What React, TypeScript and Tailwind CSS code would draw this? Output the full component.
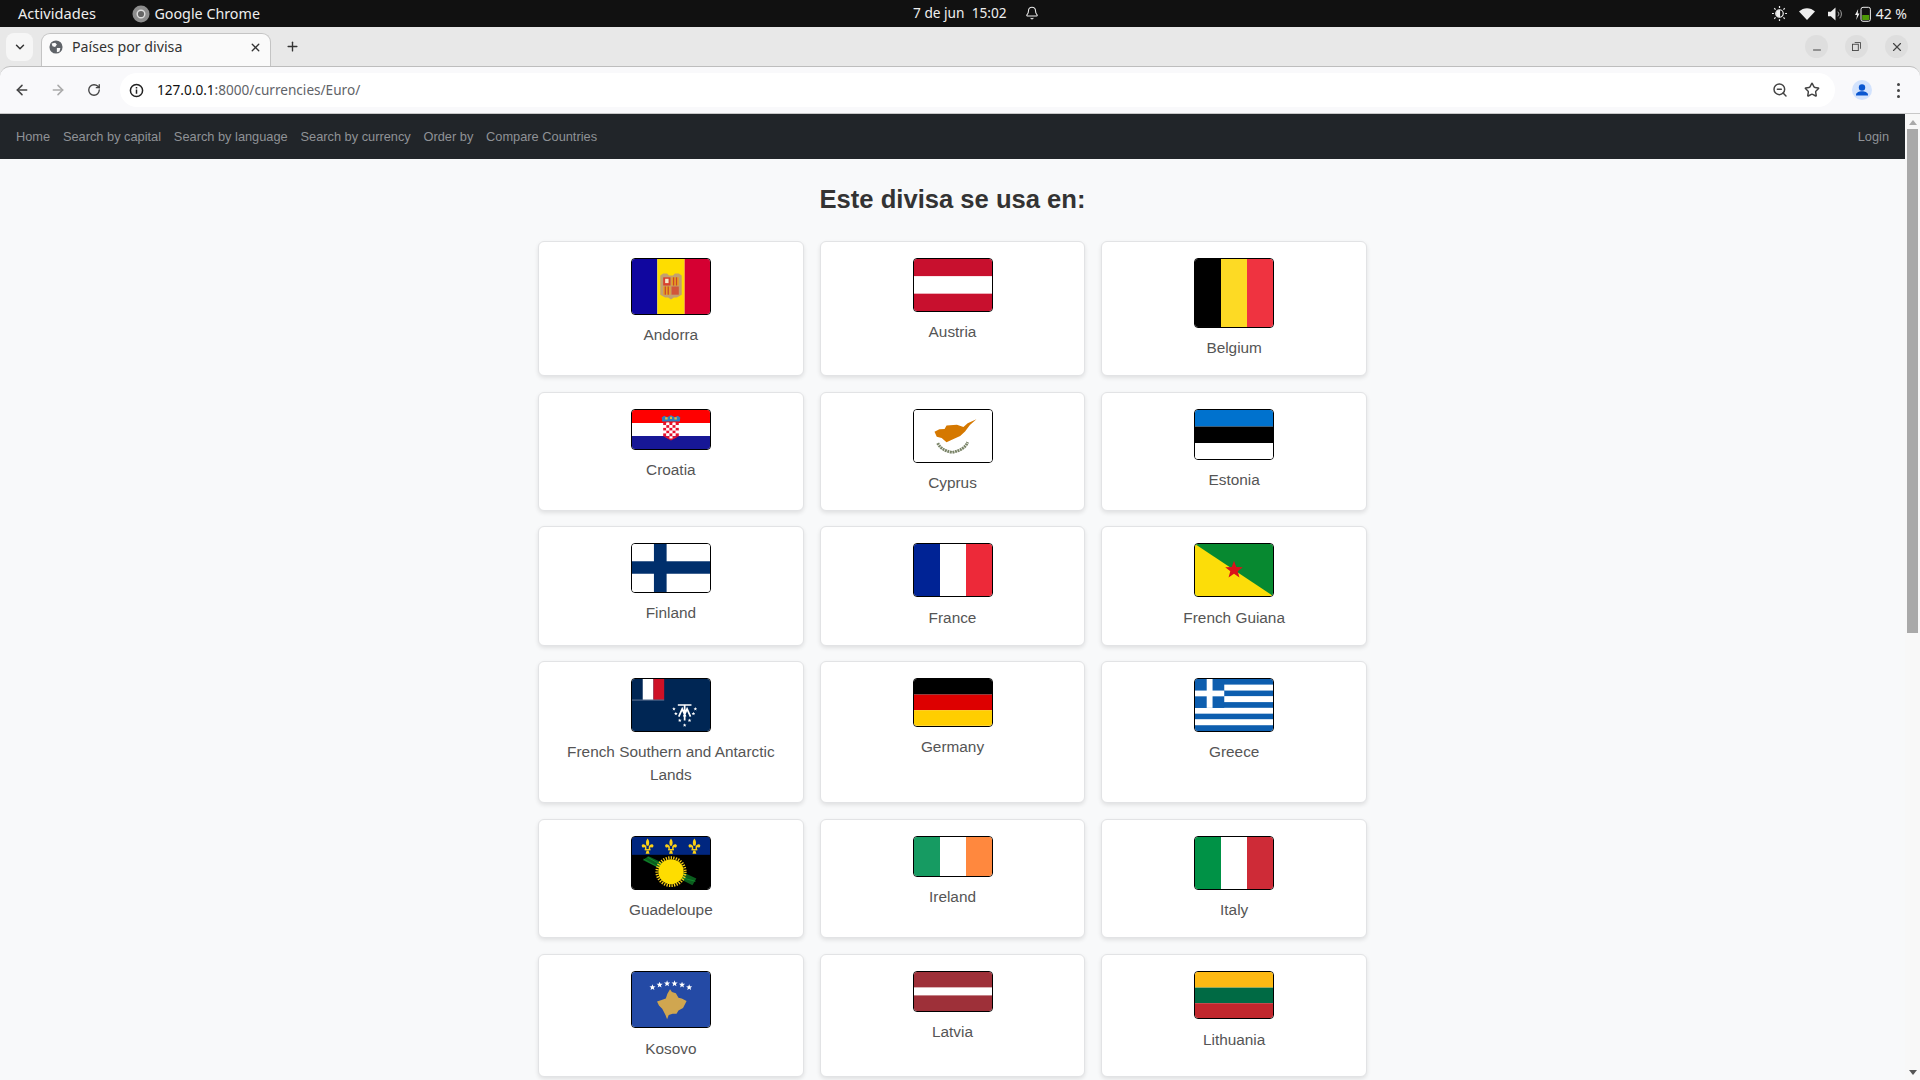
import React from "react";
import { ArrowLeft, ArrowRight, RotateCw, Star, X, Plus, ChevronDown, Minus, ZoomOut, Bell } from "lucide-react";

const H = ({ h, c, stops }: { h: number; c: string[]; stops?: number[] }) => {
  const s = stops ?? c.map((_, i) => (i * h) / c.length);
  return <>{c.map((col, i) => <rect key={i} x={0} y={s[i]} width={80} height={(i + 1 < c.length ? s[i + 1] : h) - s[i]} fill={col} />)}</>;
};
const V = ({ h, c, stops }: { h: number; c: string[]; stops?: number[] }) => {
  const s = stops ?? c.map((_, i) => (i * 80) / c.length);
  return <>{c.map((col, i) => <rect key={i} y={0} x={s[i]} height={h} width={(i + 1 < c.length ? s[i + 1] : 80) - s[i]} fill={col} />)}</>;
};
const starPts = (cx: number, cy: number, r: number) => {
  const p: string[] = [];
  for (let i = 0; i < 10; i++) {
    const a = -Math.PI / 2 + (i * Math.PI) / 5;
    const rr = i % 2 ? r * 0.42 : r;
    p.push(`${cx + rr * Math.cos(a)},${cy + rr * Math.sin(a)}`);
  }
  return p.join(" ");
};

const Fleur = ({ x }: { x: number }) => (
  <g transform={`translate(${x} 9.500)`} fill="#fcd116">
    <path d="M0-8C2-5.500 2-3 1-.5H-1C-2-3-2-5.500 0-8Z" />
    <path d="M1.200 .5C2-2.500 6-3 6-.5 6 1.500 4 2 3 1L2.500 3.500H1.200Z" />
    <path d="M-1.200 .5C-2-2.500-6-3-6-.5-6 1.500-4 2-3 1L-2.500 3.500H-1.200Z" />
    <rect x="-3" y="3" width="6" height="1.400" />
    <path d="M-1 4.400H1L2 8H-2Z" />
  </g>
);

const checks = () => {
  const out: React.ReactNode[] = [];
  for (let r = 0; r < 5; r++) for (let c = 0; c < 5; c++) {
    out.push(<rect key={`${r}-${c}`} x={32 + c * 3.2} y={13 + r * 2.9} width={3.2} height={2.9} fill={(r + c) % 2 ? "#fff" : "#e8112d"} />);
  }
  return out;
};

const flags: Record<string, { cls: string; h: number; art: React.ReactNode }> = {
  Andorra: { cls: "h-[56.6px]", h: 56.6, art: <>
    <V h={57} c={["#10069f", "#fedd00", "#d50032"]} stops={[0, 26, 54]} />
    <path d="M29 17 32 15H36L38 17H42L44 15H48L51 17V37L46 40 43 40 40 42 37 40 34 40 29 37Z" fill="#c2a070" />
    <rect x="32" y="19" width="7.500" height="8.500" fill="#d9402c" /><rect x="40.500" y="19" width="7.500" height="8.500" fill="#e8a020" />
    <rect x="32" y="28.500" width="7.500" height="8.500" fill="#e8a020" /><rect x="40.500" y="28.500" width="7.500" height="8.500" fill="#d2563a" />
    <rect x="34" y="20.500" width="3.500" height="4.500" fill="#f3e9c8" /><rect x="42" y="19" width="1.300" height="8.500" fill="#c9472c" /><rect x="45" y="19" width="1.300" height="8.500" fill="#c9472c" />
    <rect x="33.500" y="28.500" width="1.300" height="8.500" fill="#c9472c" /><rect x="36.500" y="28.500" width="1.300" height="8.500" fill="#c9472c" />
  </> },
  Austria: { cls: "h-[54px]", h: 54, art: <H h={54} c={["#c8102e", "#ffffff", "#c8102e"]} /> },
  Belgium: { cls: "h-[69.6px]", h: 69.6, art: <V h={70} c={["#000000", "#fdda24", "#ef3340"]} /> },
  Croatia: { cls: "h-[41px]", h: 41, art: <>
    <H h={41} c={["#ff0000", "#ffffff", "#171796"]} />
    <path d="M31 12 30.500 8 33 6 36 7.500 40 5.500 44 7.500 47 6 49.500 8 49 12Z" fill="#2b7fc0" />
    <path d="M34 7.500h2.500v2.500H34zM39 7h2v2.500h-2zM43.500 7.500H46V10h-2.500z" fill="#e6b933" />
    {checks()}
    <path d="M32 27.500 40 32 48 27.500Z" fill="#e8112d" /><path d="M38.400 27.500h3.200v2.500h-3.200z" fill="#fff" />
  </> },
  Cyprus: { cls: "h-[54px]", h: 54, art: <>
    <rect width="80" height="54" fill="#fff" />
    <g transform="translate(-13.300 -8.300) scale(.3333)">
      <path d="M232 54 205 66 192 78 172 71 140 73 134 84 118 85 103 93 110 108 125 112 140 125 165 114 182 106 197 92 212 72Z" fill="#d57800" />
      <path d="M113 128Q122 150 157 157Q195 150 205 125" fill="none" stroke="#7a8468" strokeWidth="9" strokeDasharray="6 2" />
    </g>
  </> },
  Estonia: { cls: "h-[51.6px]", h: 51.6, art: <H h={51.6} c={["#0072ce", "#000000", "#ffffff"]} /> },
  Finland: { cls: "h-[49.7px]", h: 49.7, art: <>
    <rect width="80" height="50" fill="#fff" />
    <rect x="22.500" width="13" height="50" fill="#002f6c" /><rect y="18" width="80" height="13" fill="#002f6c" />
  </> },
  France: { cls: "h-[54px]", h: 54, art: <V h={54} c={["#002395", "#ffffff", "#ed2939"]} /> },
  "French Guiana": { cls: "h-[54px]", h: 54, art: <>
    <rect width="80" height="54" fill="#078930" /><path d="M0 0 80 54H0Z" fill="#fcdd09" />
    <polygon points={starPts(40, 27, 9.500)} fill="#da121a" />
  </> },
  "French Southern and Antarctic Lands": { cls: "h-[54px]", h: 54, art: <>
    <rect width="80" height="54" fill="#002654" />
    <rect x="11" width="11" height="21.500" fill="#fff" /><rect x="22" width="11" height="21.500" fill="#ce1126" />
    <rect y="21.500" width="33" height=".7" fill="#8b9ab3" />
    <g fill="none" stroke="#fff" strokeWidth="1.800">
      <path d="M47 27H61M54 27V40M48 39 51.500 31 55 39M53 39 56.500 31 60 39M54 38V43" />
    </g>
    {[[43, 31], [65, 31], [45, 36], [63, 36], [49, 43], [59, 43], [54, 48]].map(([x, y], i) => <polygon key={i} points={starPts(x, y, 2)} fill="#fff" />)}
  </> },
  Germany: { cls: "h-[48.8px]", h: 48.8, art: <H h={48.8} c={["#000000", "#dd0000", "#ffce00"]} /> },
  Greece: { cls: "h-[54px]", h: 54, art: <>
    <H h={54} c={["#0d5eaf", "#fff", "#0d5eaf", "#fff", "#0d5eaf", "#fff", "#0d5eaf", "#fff", "#0d5eaf"]} />
    <rect width="30" height="30" fill="#0d5eaf" />
    <rect x="12" width="6" height="30" fill="#fff" /><rect y="12" width="30" height="6" fill="#fff" />
  </> },
  Guadeloupe: { cls: "h-[54px]", h: 54, art: <>
    <rect width="80" height="54" fill="#000" /><rect width="80" height="18.500" fill="#00267f" />
    <Fleur x={16} /><Fleur x={40} /><Fleur x={64} />
    <path d="M11 24 17 20 66 43 62 50Z" fill="#0b5d1e" />
    <path d="M12 23 30 33M16 21 32 30M50 42 65 46" stroke="#0f8a2b" strokeWidth="1" />
    <circle cx="40" cy="36" r="14.500" fill="none" stroke="#fcd116" strokeWidth="3" strokeDasharray="1.300 1.300" />
    <circle cx="40" cy="36" r="13" fill="#fedd00" />
  </> },
  Ireland: { cls: "h-[41px]", h: 41, art: <V h={41} c={["#169b62", "#ffffff", "#ff883e"]} /> },
  Italy: { cls: "h-[54px]", h: 54, art: <V h={54} c={["#009246", "#ffffff", "#ce2b37"]} /> },
  Kosovo: { cls: "h-[57.7px]", h: 57.7, art: <>
    <rect width="80" height="58" fill="#244aa5" />
    <g transform="translate(-11 -6) scale(.3333)">
      <path d="M150 72 156 80 168 84 176 98 186 100 201 108 196 118 190 130 176 138 170 148 158 148 146 152 141 165 136 152 126 132 116 122 110 110 124 105 137 100 142 86Z" fill="#d0a650" />
      {[[96, 66], [118, 58], [141, 54], [164, 54], [187, 58], [209, 66]].map(([x, y], i) => <polygon key={i} points={starPts(x, y, 10)} fill="#fff" />)}
    </g>
  </> },
  Latvia: { cls: "h-[41px]", h: 41, art: <H h={41} c={["#9e3039", "#ffffff", "#9e3039"]} stops={[0, 16.400, 24.600]} /> },
  Lithuania: { cls: "h-[48.8px]", h: 48.8, art: <H h={48.8} c={["#fdb913", "#006a44", "#c1272d"]} /> },
};

const names = Object.keys(flags);

function Card({ name }: { name: string }) {
  const f = flags[name];
  return (
    <div className="rounded-[6px] border border-[#e2e3e5] bg-white p-4 text-center shadow-[0_2px_4px_rgba(0,0,0,0.1)]">
      <div className={`mx-auto mb-[8.2px] w-20 overflow-hidden rounded-[4px] border border-black ${f.cls}`}>
        <svg viewBox={`0 0 80 ${f.h}`} preserveAspectRatio="none" className="block h-full w-full">{f.art}</svg>
      </div>
      <p className="text-[15.36px] leading-[23px] text-[#555]">{name}</p>
    </div>
  );
}

function TopBar() {
  return (
    <div className="relative flex h-[27px] shrink-0 items-center bg-[#111] pl-[18px] pr-[13px] font-['Noto_Sans',sans-serif] text-[14.6px] text-[#eee]">
      <span>Actividades</span>
      <svg viewBox="0 0 18 18" className="ml-[36px] h-[18px] w-[18px]">
        <circle cx="9" cy="9" r="8.500" fill="#8d8d8d" /><circle cx="9" cy="9" r="3.800" fill="#666" stroke="#ddd" strokeWidth="1.400" />
      </svg>
      <span className="ml-[4.500px] text-[14.3px]">Google Chrome</span>
      <div className="absolute left-[913px] flex items-center">
        <span className="w-[100px] text-[13.7px]">7 de jun&nbsp;&nbsp;15:02</span>
        <Bell size={14} className="ml-[12px]" strokeWidth={1.8} />
      </div>
      <div className="ml-auto flex items-center">
        <svg viewBox="0 0 16 16" className="h-[15px] w-[15px]" fill="none" stroke="#eee" strokeWidth="1.300">
          <circle cx="8" cy="8" r="4" /><path d="M8 5a3 3 0 0 0 0 6Z" fill="#eee" />
          <path d="M8 0v2M8 14v2M0 8h2M14 8h2M2.400 2.400l1.400 1.400M12.200 12.200l1.400 1.400M2.400 13.600l1.400-1.400M12.200 3.800l1.400-1.400" />
        </svg>
        <svg viewBox="0 0 16 12" className="ml-[12px] h-[12px] w-[16px]"><path d="M0 3.500C4.500-1 11.500-1 16 3.500L8 12Z" fill="#eee" /></svg>
        <svg viewBox="0 0 16 14" className="ml-[13px] h-[14px] w-[15px]" fill="#eee">
          <path d="M0 4.500H3L8 0V14L3 9.500H0Z" /><path d="M10.500 4.500a3.500 3.500 0 0 1 0 5M12.500 2.500a6.500 6.500 0 0 1 0 9" fill="none" stroke="#aaa" strokeWidth="1" />
        </svg>
        <svg viewBox="0 0 16 16" className="ml-[12px] h-[16px] w-[16px]">
          <path d="M3.200 3 0 9H2L1.200 14 4.500 7.500H2.700Z" fill="#eee" />
          <rect x="6" y="1.300" width="9.400" height="14" rx="2" fill="none" stroke="#eee" strokeWidth="1" />
          <rect x="7.200" y="9" width="7" height="5" fill="#4e9a06" />
        </svg>
        <span className="ml-[5px] text-[14px]">42 %</span>
      </div>
    </div>
  );
}

function Chrome() {
  return (
    <>
      <div className="flex h-[39px] shrink-0 bg-[#e8e8e8] pl-[6px] pt-[6px] font-['Noto_Sans',sans-serif]">
        <div className="flex h-[28px] w-[27px] items-center justify-center rounded-[8px] bg-[#f6f6f6]"><ChevronDown size={14} strokeWidth={2.500} className="text-[#333]" /></div>
        <div className="ml-[8px] flex h-[33px] w-[230px] items-center rounded-t-[9px] border border-b-0 border-[#c4c4c4] bg-[#fafafa] pb-[6px] pl-[7px] pr-[8px] text-[14.2px] text-[#333]">
          <svg viewBox="0 0 16 16" className="h-[14px] w-[14px]"><circle cx="8" cy="8" r="7.500" fill="#5f6368" /><path d="M3 4 7 3 9 5 7 8 4 7ZM9 9 13 9 12 13 9 14Z" fill="#fafafa" /></svg>
          <span className="ml-[9px]">Países por divisa</span>
          <X size={13} strokeWidth={2.500} className="ml-auto text-[#333]" />
        </div>
        <Plus size={15} strokeWidth={2.200} className="ml-[14px] mt-[6px] text-[#333]" />
        <div className="ml-auto mr-[12px] mt-[2px] flex gap-[17px]">
          {[<Minus key="a" size={12} className="mt-[7px]" />, <svg key="b" viewBox="0 0 10 10" className="h-[9px] w-[9px]" fill="none" stroke="#444"><rect x=".5" y="2.500" width="6.500" height="7" /><path d="M3 .5h6.500v7" /></svg>, <X key="c" size={14} />].map((ic, i) => (
            <div key={i} className="flex h-[23px] w-[23px] items-center justify-center rounded-full bg-[#dedede] text-[#444]">{ic}</div>
          ))}
        </div>
      </div>
      <div className="flex h-[48px] shrink-0 items-center rounded-t-[10px] border-b border-t border-b-[#c8c8c8] border-t-[#bdbdbd] bg-[#f9f9fb] font-['Noto_Sans',sans-serif]">
        <ArrowLeft size={16} strokeWidth={2.300} className="ml-[14px] text-[#444]" />
        <ArrowRight size={16} strokeWidth={2.300} className="ml-[20px] text-[#aaa]" />
        <RotateCw size={14} strokeWidth={2.300} className="ml-[21px] text-[#444]" />
        <div className="ml-[19px] flex h-[34px] w-[1715px] items-center rounded-full bg-white pl-[9px] pr-[15px]">
          <svg viewBox="0 0 16 16" className="h-[15px] w-[15px]" fill="none" stroke="#222" strokeWidth="1.600"><circle cx="8" cy="8" r="6.500" /><path d="M8 7v4.500M8 4.200v1.600" /></svg>
          <span className="ml-[13px] text-[13.6px] text-[#111]">127.0.0.1<span className="text-[#5f6368]">:8000/currencies/Euro/</span></span>
          <ZoomOut size={16} strokeWidth={2.200} className="ml-auto text-[#444]" />
          <Star size={16} strokeWidth={2.200} className="ml-[16px] text-[#444]" />
        </div>
        <div className="ml-[17px] flex h-[20px] w-[20px] items-center justify-center overflow-hidden rounded-full bg-[#d3e3fd]">
          <svg viewBox="0 0 20 20" className="h-[20px] w-[20px]" fill="#0b57d0"><circle cx="10" cy="7.500" r="3.200" /><path d="M4 15c0-5 12-5 12 0v.500H4Z" /></svg>
        </div>
        <div className="ml-[25px] flex flex-col gap-[3px]">
          {[0, 1, 2].map((i) => <span key={i} className="h-[3px] w-[3px] rounded-full bg-[#444]" />)}
        </div>
      </div>
    </>
  );
}

export default function App() {
  const links = ["Home", "Search by capital", "Search by language", "Search by currency", "Order by", "Compare Countries"];
  return (
    <div className="flex h-screen flex-col overflow-hidden bg-[#e8e8e8]">
      <TopBar />
      <Chrome />
      <div className="flex min-h-0 flex-1">
        <div className="min-w-0 flex-1 overflow-hidden bg-[#f8f9fa] font-['Liberation_Sans',sans-serif]">
          <nav className="flex h-[45px] items-center bg-[#212529] px-[9.600px] text-[12.800px] text-[#8f9296]">
            {links.map((l) => <a key={l} className="px-[6.400px]">{l}</a>)}
            <a className="ml-auto px-[6.400px]">Login</a>
          </nav>
          <h2 className="mt-[25px] text-center text-[25.600px] font-bold leading-[30px] text-[#333]">Este divisa se usa en:</h2>
          <div className="ml-[538.03px] mt-[27.200px] grid w-[829px] grid-cols-3 gap-x-4 gap-y-[15.6px]">
            {names.map((n) => <Card key={n} name={n} />)}
          </div>
        </div>
        <div className="flex w-[15px] shrink-0 flex-col items-center bg-[#f8f8f8]">
          <div className="mt-[6px] h-0 w-0 border-x-[4px] border-b-[5px] border-x-transparent border-b-[#aaa]" />
          <div className="mt-[4px] h-[504px] w-[11px] bg-[#a9a9a9]" />
          <div className="mt-auto mb-[5px] h-0 w-0 border-x-[4px] border-t-[5px] border-x-transparent border-t-[#555]" />
        </div>
      </div>
    </div>
  );
}
